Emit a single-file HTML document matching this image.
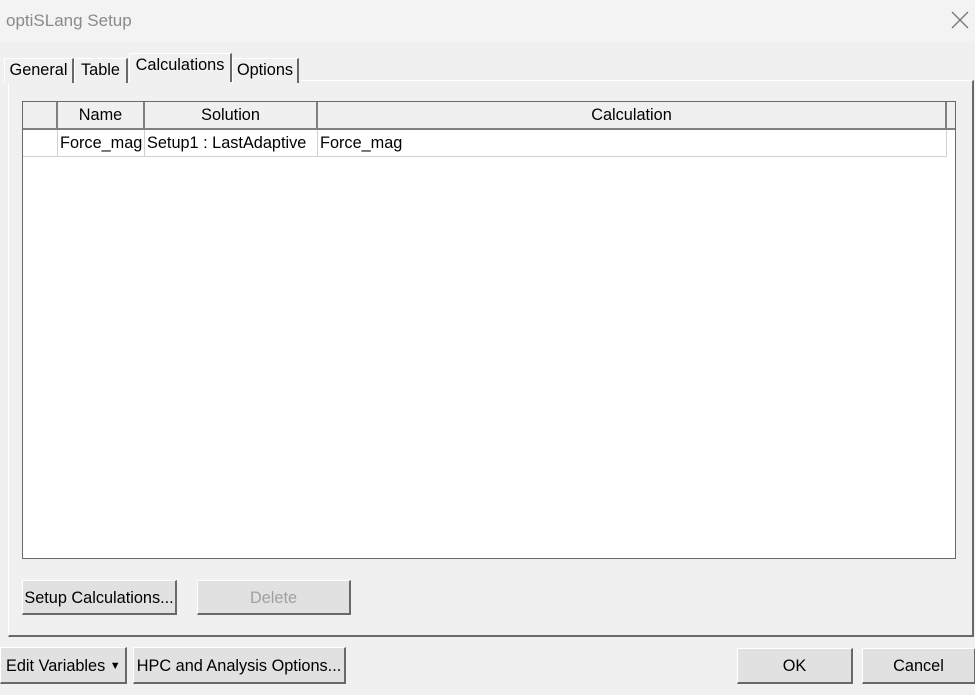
<!DOCTYPE html>
<html><head><style>
body{margin:0;width:975px;height:695px;background:#f0f0f0;font-family:"Liberation Sans",Arial,sans-serif;font-size:16.3px;color:#000;position:relative;overflow:hidden}
.abs{position:absolute}
.title{left:0;top:0;width:975px;height:42px;background:#f3f3f3}
.btn{position:absolute;box-sizing:border-box;background:#e1e1e1;border:1px solid #fff;border-right:2px solid #696969;border-bottom:2px solid #696969;text-align:center;line-height:34px}
.tab{position:absolute;top:56px;height:25px;box-sizing:border-box;border:1px solid #fff;border-right:2px solid #696969;border-bottom:none;line-height:22px;text-align:center;background:#f0f0f0}
.cell{position:absolute;box-sizing:border-box;line-height:27px;white-space:nowrap;overflow:hidden}
</style></head><body>
<div class="abs title"></div>
<div class="abs" style="left:6px;top:11px;color:#8a8a8a;font-size:17px">optiSLang Setup</div>
<svg class="abs" style="left:951px;top:11px" width="18" height="18"><path d="M1 1L17 17M17 1L1 17" stroke="#777" stroke-width="1.3"/></svg>

<div class="abs" style="left:8px;top:80px;width:966px;height:557px;box-sizing:border-box;border-top:1px solid #fff;border-left:1px solid #fff;border-right:2px solid #696969;border-bottom:2px solid #696969"></div>
<div class="tab" style="left:4px;top:58px;width:70px">General</div>
<div class="tab" style="left:74px;top:58px;width:54px">Table</div>
<div class="tab" style="left:129px;top:53px;width:103px;height:29px;border-bottom:none;z-index:2">Calculations</div>
<div class="tab" style="left:232px;top:58px;width:67px">Options</div>

<div class="abs" style="left:22px;top:101px;width:934px;height:458px;background:#fff;box-sizing:border-box;border:1px solid #696969"></div>
<div class="abs" style="left:23px;top:102px;width:932px;height:26px;background:#f0f0f0;border-bottom:2px solid #808080"></div>
<div class="cell" style="left:23px;top:102px;width:35px;height:26px;border-right:2px solid #808080"></div>
<div class="cell" style="left:58px;top:102px;width:87px;height:26px;border-right:2px solid #808080;text-align:center">Name</div>
<div class="cell" style="left:145px;top:102px;width:173px;height:26px;border-right:2px solid #808080;text-align:center">Solution</div>
<div class="cell" style="left:318px;top:102px;width:629px;height:26px;border-right:2px solid #808080;text-align:center">Calculation</div>
<div class="cell" style="left:23px;top:130px;width:35px;height:27px;border-right:1px solid #d0d0d0;border-bottom:1px solid #d0d0d0"></div>
<div class="cell" style="left:58px;top:130px;width:87px;height:27px;border-right:1px solid #d0d0d0;border-bottom:1px solid #d0d0d0;padding-left:2px">Force_mag</div>
<div class="cell" style="left:145px;top:130px;width:173px;height:27px;border-right:1px solid #d0d0d0;border-bottom:1px solid #d0d0d0;padding-left:2px">Setup1 : LastAdaptive</div>
<div class="cell" style="left:318px;top:130px;width:629px;height:27px;border-right:1px solid #d0d0d0;border-bottom:1px solid #d0d0d0;padding-left:2px">Force_mag</div>

<div class="btn" style="left:22px;top:580px;width:155px;height:35px">Setup Calculations...</div>
<div class="btn" style="left:197px;top:580px;width:154px;height:35px;color:#a0a0a0">Delete</div>

<div class="btn" style="left:0;top:647px;width:127px;height:37px;line-height:36px;text-align:left;padding-left:5px">Edit Variables <span style="font-size:11px;position:relative;top:-2px">▼</span></div>
<div class="btn" style="left:133px;top:647px;width:213px;height:37px;line-height:36px">HPC and Analysis Options...</div>
<div class="btn" style="left:737px;top:648px;width:116px;height:36px;line-height:35px">OK</div>
<div class="btn" style="left:862px;top:648px;width:114px;height:36px;line-height:35px">Cancel</div>
</body></html>
